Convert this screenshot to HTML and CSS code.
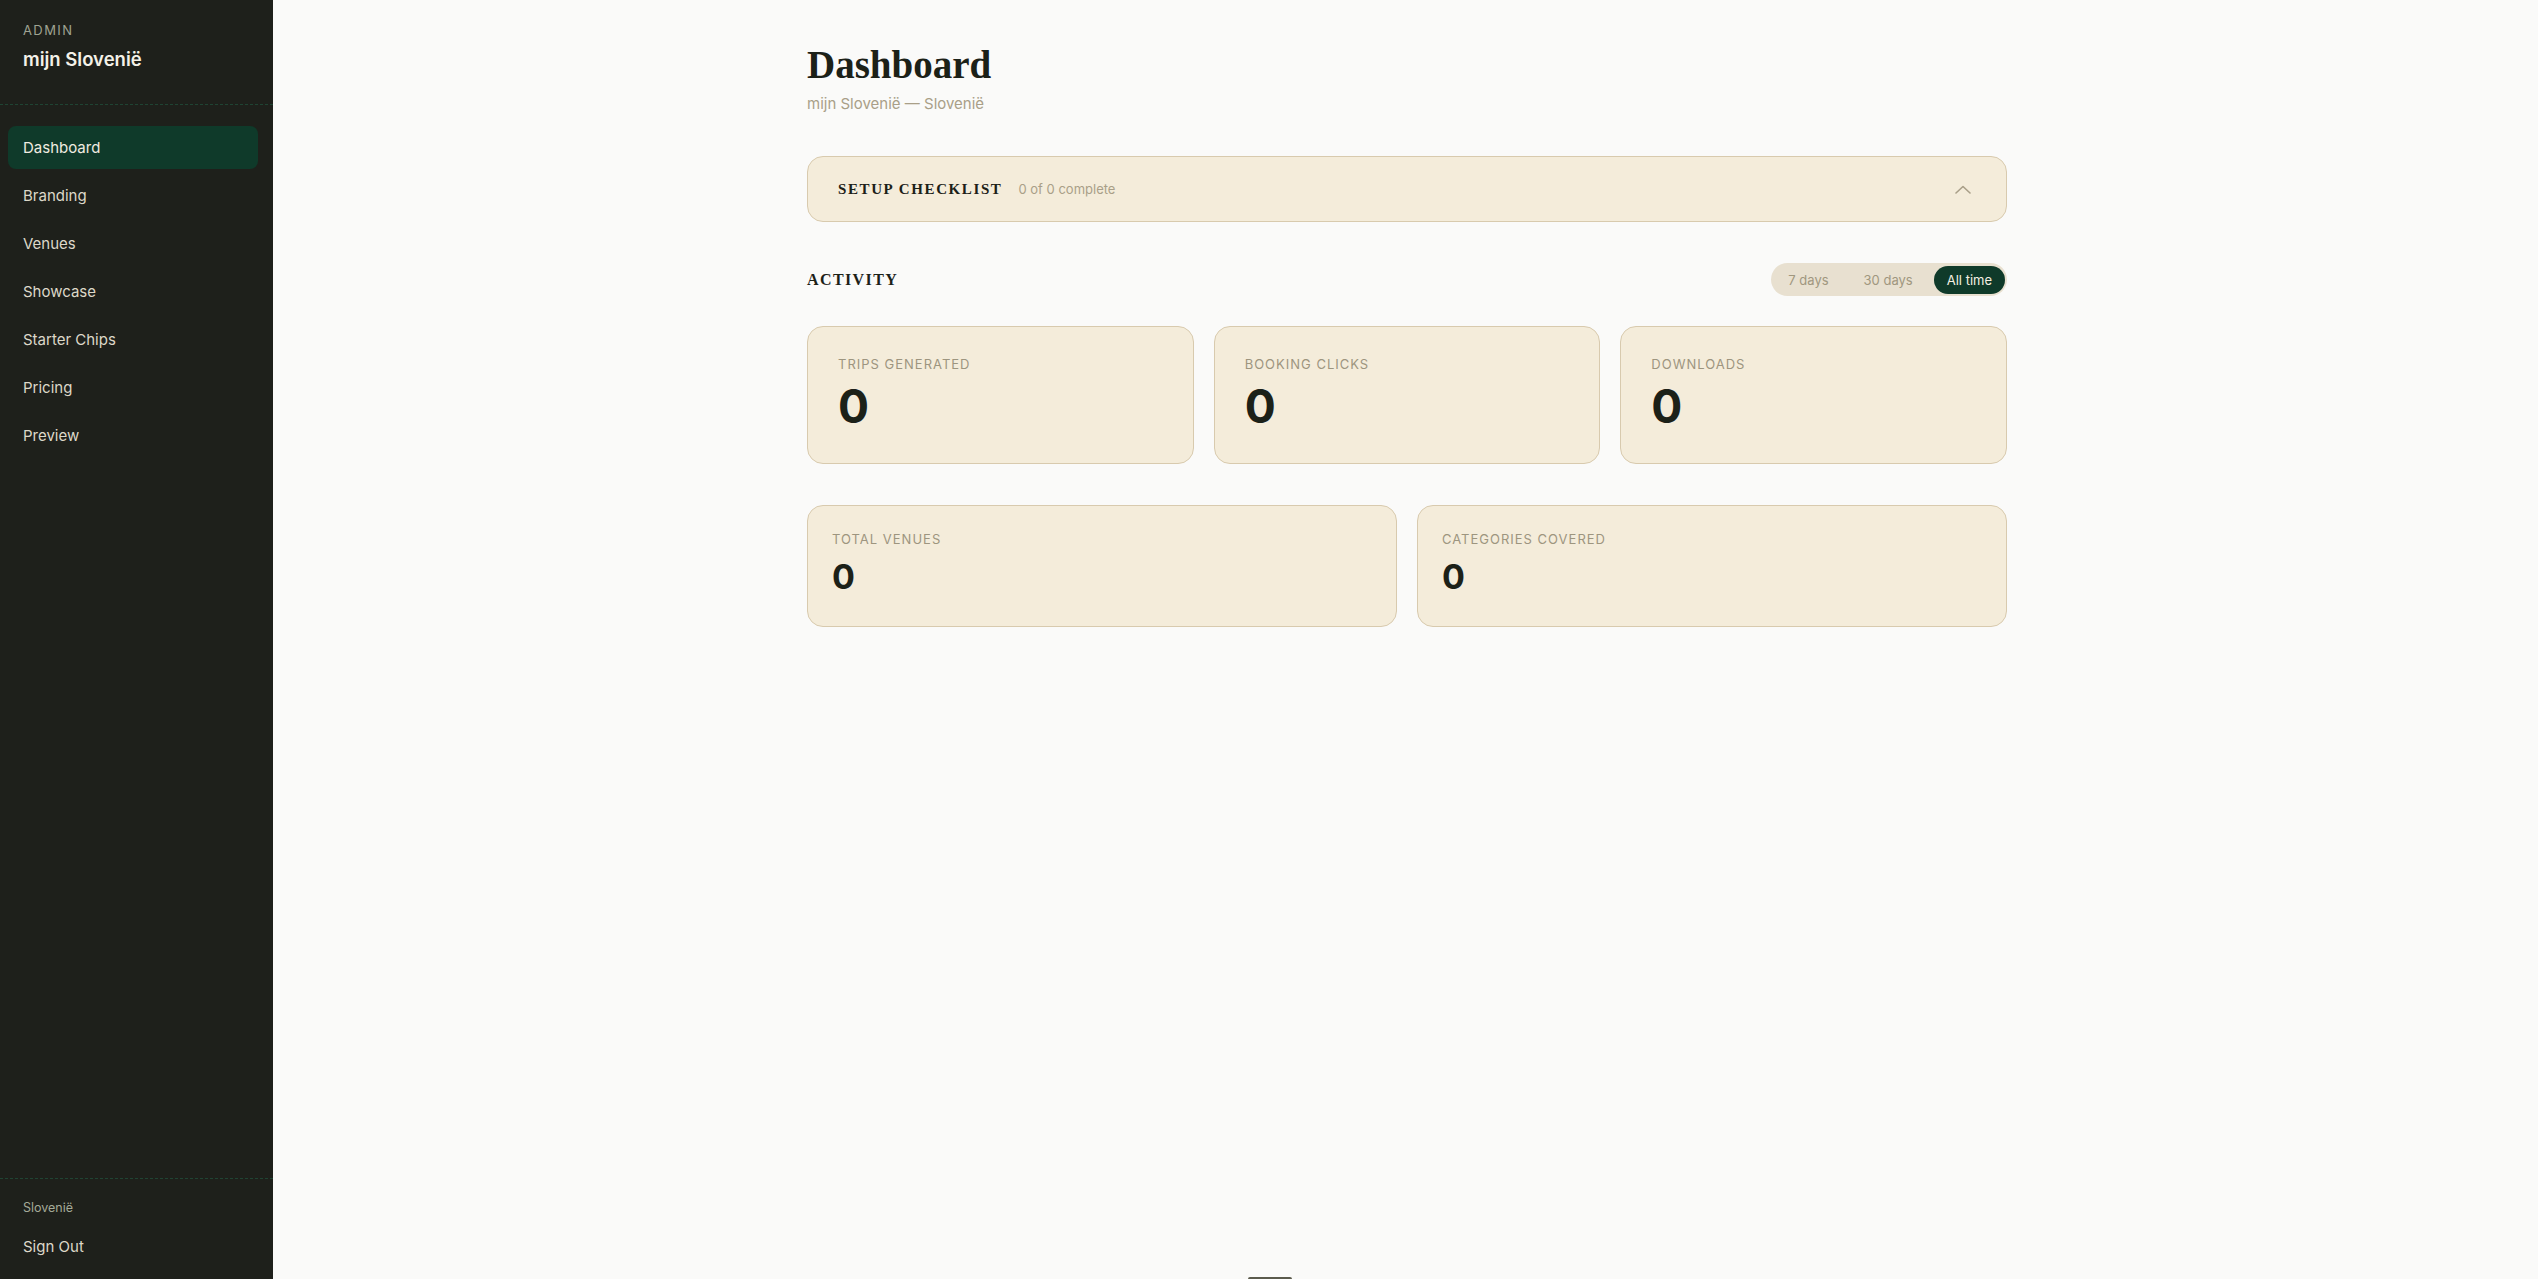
FILE: index.html
```html
<!DOCTYPE html>
<html lang="nl">
  <head>
    <meta charset="UTF-8" />
    <meta name="viewport" content="width=device-width, initial-scale=1.0" />
    <title>Admin — Dashboard</title>
    <link rel="stylesheet" href="styles.css">
  </head>
  <body>
    <div class="layout">
      <aside class="sidebar">
        <div class="sidebar-head">
          <p class="sidebar-kicker">ADMIN</p>
          <p class="sidebar-brand">mijn Slovenië</p>
        </div>

        <nav class="nav">
          <a class="nav-item active" href="#">Dashboard</a>
          <a class="nav-item" href="#">Branding</a>
          <a class="nav-item" href="#">Venues</a>
          <a class="nav-item" href="#">Showcase</a>
          <a class="nav-item" href="#">Starter Chips</a>
          <a class="nav-item" href="#">Pricing</a>
          <a class="nav-item" href="#">Preview</a>
        </nav>

        <div class="sidebar-foot">
          <p class="sidebar-region">Slovenië</p>
          <a class="sign-out" href="#">Sign Out</a>
        </div>
      </aside>

      <main class="main">
        <div class="container">
          <h1 class="page-title">Dashboard</h1>
          <p class="page-sub">mijn Slovenië — Slovenië</p>

          <section class="checklist">
            <div class="checklist-left">
              <span class="checklist-title">SETUP CHECKLIST</span>
              <span class="checklist-count">0 of 0 complete</span>
            </div>
            <svg class="chevron" width="16" height="9" viewBox="0 0 16 9" fill="none">
              <path d="M1 8 L8 1.5 L15 8" stroke="#a99f88" stroke-width="1.6" stroke-linecap="round" stroke-linejoin="round" />
            </svg>
          </section>

          <div class="activity-head">
            <h2 class="section-title">ACTIVITY</h2>
            <div class="range">
              <button class="range-btn">7 days</button>
              <button class="range-btn">30 days</button>
              <button class="range-btn on">All time</button>
            </div>
          </div>

          <div class="stats three">
            <div class="stat">
              <p class="stat-label">TRIPS GENERATED</p>
              <p class="stat-value">0</p>
            </div>
            <div class="stat">
              <p class="stat-label">BOOKING CLICKS</p>
              <p class="stat-value">0</p>
            </div>
            <div class="stat">
              <p class="stat-label">DOWNLOADS</p>
              <p class="stat-value">0</p>
            </div>
          </div>

          <div class="stats two">
            <div class="stat small">
              <p class="stat-label">TOTAL VENUES</p>
              <p class="stat-value">0</p>
            </div>
            <div class="stat small">
              <p class="stat-label">CATEGORIES COVERED</p>
              <p class="stat-value">0</p>
            </div>
          </div>
        </div>
      </main>
    </div>

    <div class="dev-tab"></div>
  </body>
</html>
```

FILE: styles.css
```css
* {
  box-sizing: border-box;
}
html,
body {
  margin: 0;
  height: 100%;
}
body {
  font-family: Inter, "Noto Sans", sans-serif;
  background: #fafaf9;
  color: #1c2118;
}
p,
h1,
h2 {
  margin: 0;
}
a {
  text-decoration: none;
}

.layout {
  display: flex;
  height: 100vh;
}

/* sidebar */
.sidebar {
  width: 273px;
  flex-shrink: 0;
  background: #1e201b;
  display: flex;
  flex-direction: column;
}
.sidebar-head {
  padding: 21px 23px 0;
  height: 105px;
  border-bottom: 1px dashed #1f4433;
}
.sidebar-kicker {
  font-size: 13px;
  letter-spacing: 1.4px;
  color: #9ea392;
  line-height: 18px;
}
.sidebar-brand {
  margin-top: 7px;
  font-size: 18.5px;
  font-weight: 600;
  color: #f4f1e8;
  line-height: 26px;
}
.nav {
  display: flex;
  flex-direction: column;
  gap: 5px;
  padding: 21px 15px 0 8px;
  flex: 1;
}
.nav-item {
  display: block;
  height: 43px;
  line-height: 43px;
  padding: 0 15px;
  border-radius: 8px;
  font-size: 15px;
  color: #ddd8c9;
}
.nav-item.active {
  background: #0f3a2a;
  color: #f0ece0;
}
.sidebar-foot {
  border-top: 1px dashed #1f4433;
  padding: 20px 23px 22px;
}
.sidebar-region {
  font-size: 12.5px;
  color: #a4aa98;
  line-height: 18px;
}
.sign-out {
  display: block;
  margin-top: 20px;
  font-size: 15px;
  line-height: 20px;
  color: #ddd8c9;
}

/* main */
.main {
  flex: 1;
  overflow: auto;
  padding-left: 3px;
}
.container {
  max-width: 1200px;
  margin: 0 auto;
  padding-top: 41px;
}
.page-title {
  font-family: "Liberation Serif", "DejaVu Serif", serif;
  font-size: 39px;
  line-height: 47px;
  font-weight: 700;
  color: #1c2118;
}
.page-sub {
  margin-top: 6px;
  font-size: 15px;
  line-height: 20px;
  color: #a99f88;
}

.checklist {
  margin-top: 42px;
  height: 66px;
  background: #f4ecda;
  border: 1px solid #d8caae;
  border-radius: 16px;
  padding: 0 35px 0 30px;
  display: flex;
  align-items: center;
  justify-content: space-between;
}
.checklist-left {
  display: flex;
  align-items: baseline;
  gap: 16px;
}
.checklist-title {
  font-family: "Liberation Serif", "DejaVu Serif", serif;
  font-weight: 700;
  font-size: 15px;
  letter-spacing: 1.6px;
  color: #1c2118;
}
.checklist-count {
  font-size: 13px;
  color: #a99f88;
}
.chevron {
  display: block;
}

.activity-head {
  margin-top: 41px;
  display: flex;
  align-items: center;
  justify-content: space-between;
}
.section-title {
  font-family: "Liberation Serif", "DejaVu Serif", serif;
  font-weight: 700;
  font-size: 16px;
  letter-spacing: 1.4px;
  color: #1c2118;
}
.range {
  display: flex;
  gap: 7px;
  background: #e8e0d0;
  border-radius: 20px;
  padding: 3px 2px 2px 3px;
}
.range-btn {
  border: none;
  background: none;
  font-family: Inter, "Noto Sans", sans-serif;
  font-size: 13px;
  height: 28px;
  padding: 0 14px;
  border-radius: 14px;
  color: #a0977f;
  cursor: pointer;
}
.range-btn.on {
  background: #0f3a2a;
  color: #f4efe2;
  padding: 0 13px;
}

.stats {
  display: grid;
  gap: 20px;
}
.stats.three {
  grid-template-columns: repeat(3, 1fr);
  margin-top: 30px;
}
.stats.two {
  grid-template-columns: repeat(2, 1fr);
  margin-top: 41px;
}
.stat {
  background: #f4ecda;
  border: 1px solid #d8caae;
  border-radius: 16px;
  padding: 29px 30px 31px;
}
.stat-label {
  font-size: 13px;
  line-height: 17px;
  letter-spacing: 1px;
  color: #9d957f;
}
.stat-value {
  margin-top: 8px;
  font-size: 46px;
  line-height: 51px;
  font-weight: 700;
  color: #1c2118;
}
.stat.small {
  padding: 25px 24px 31px;
}
.stat.small .stat-value {
  margin-top: 10px;
  font-size: 34px;
  line-height: 37px;
}

.dev-tab {
  position: fixed;
  left: 1248px;
  bottom: 0;
  width: 44px;
  height: 2px;
  background: #5b5b4d;
  border-radius: 2px 2px 0 0;
}
```
